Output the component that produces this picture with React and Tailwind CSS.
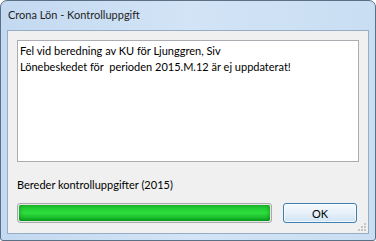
import React from 'react'

export default function App() {
  const font = { fontFamily: 'Lato, "Liberation Sans", sans-serif' }
  return (
    <div className="w-[376px] h-[241px] bg-white" style={font}>
      {/* Window frame */}
      <div className="w-[376px] h-[241px] flex flex-col rounded-t-[7px] rounded-b-[3px] border border-[#5b6f85] bg-gradient-to-r from-[#c3d9f1] via-[#d2e4f6] to-[#c9def3]">
        {/* Title bar */}
        <div className="h-[29px] flex items-center pl-[7px] text-[11px] text-[#1e1e1e]">
          Crona Lön - Kontrolluppgift
        </div>

        {/* Client area */}
        <div className="mx-[6px] h-[204px] border border-[#97adc6] bg-[#f0f0f0] flex flex-col px-[9px] pt-[9px] relative">
          <div className="h-[122px] border border-[#abadb3] bg-white px-[2px] pt-[2px] text-[11px] leading-[16px] text-black">
            <div>Fel vid beredning av KU för Ljunggren, Siv</div>
            <div className="whitespace-pre">Lönebeskedet för  perioden 2015.M.12 är ej uppdaterat!</div>
          </div>

          <div className="mt-[15px] h-[15px] text-[11px] leading-[15px] text-black">
            Bereder kontrolluppgifter (2015)
          </div>

          <div className="mt-[11px] flex items-center gap-[11px]">
            {/* Progress bar */}
            <div className="w-[255px] h-[20px] rounded-[3px] border border-[#a8a8a8] bg-[#e6e6e6] p-[1px]">
              <div className="w-full h-full rounded-[2px] bg-gradient-to-b from-[#1ec12f] via-[#2ede3e] to-[#07a51f] shadow-[inset_2px_0_3px_rgba(0,90,10,0.25),inset_-2px_0_3px_rgba(0,90,10,0.25)]" />
            </div>
            {/* OK button */}
            <button className="w-[74px] h-[20px] rounded-[3px] border border-[#3c7fb1] bg-gradient-to-b from-[#f4f9fd] via-[#e7f1fa] to-[#cfe3f2] text-[11px] leading-none text-black shadow-[inset_0_0_0_1px_rgba(255,255,255,0.7)]">
              OK
            </button>
          </div>

          {/* Size grip */}
          <svg className="absolute right-[1px] bottom-[1px]" width="10" height="10" viewBox="0 0 10 10">
            {[[7, 1], [4, 4], [7, 4], [1, 7], [4, 7], [7, 7]].map(([x, y], i) => (
              <rect key={i} x={x} y={y} width="2" height="2" fill="#c5c5c5" />
            ))}
          </svg>
        </div>
      </div>
    </div>
  )
}
